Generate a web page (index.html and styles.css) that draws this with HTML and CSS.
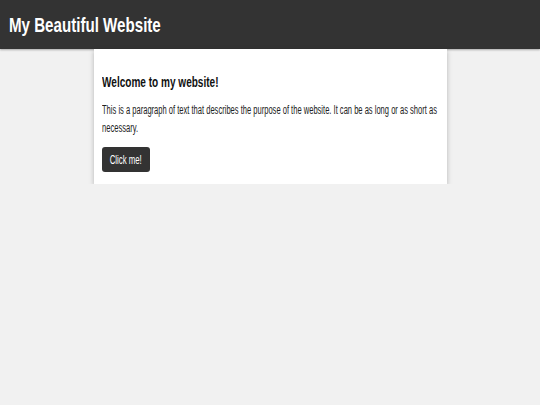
FILE: index.html
```html
<!DOCTYPE html>
<html>
<head>
<meta charset="utf-8">
<link rel="stylesheet" href="styles.css">
</head>
<body>
<header class="site-header">
  <h1 class="site-title"><span class="squeeze">My Beautiful Website</span></h1>
</header>
<main class="card">
  <h2 class="card-title"><span class="squeeze">Welcome to my website!</span></h2>
  <p class="card-text">This is a paragraph of text that describes the purpose of the website. It can be as long or as short as necessary.</p>
  <button class="btn"><span class="squeeze btn-label">Click me!</span></button>
</main>
</body>
</html>
```
FILE: styles.css
```css
html, body {
  margin: 0;
  padding: 0;
}
body {
  background: #f1f1f1;
  font-family: "Liberation Sans", Arial, sans-serif;
  color: #222;
}
.squeeze {
  display: inline-block;
  white-space: nowrap;
  transform-origin: left center;
}
.site-header {
  background: #333;
  height: 49px;
  display: flex;
  align-items: center;
  padding: 0 9px;
  box-shadow: 0 1px 2px rgba(0,0,0,0.3);
}
.site-title {
  margin: 0;
  color: #fff;
  font-size: 21px;
  font-weight: bold;
}
.site-title .squeeze {
  transform: scaleX(0.72);
}
.card {
  width: 337px;
  margin: 0 auto;
  background: #fff;
  padding: 24px 8px 12px;
  box-shadow: 0 2px 5px rgba(0,0,0,0.25);
  overflow: hidden;
}
.card-title {
  margin: 0 0 11px;
  font-size: 15px;
  font-weight: bold;
  color: #111;
}
.card-title .squeeze {
  transform: scaleX(0.67);
}
.card-text {
  width: 535px;
  margin: 0 0 10px;
  font-size: 12px;
  line-height: 18px;
  color: #222;
  transform: scaleX(0.63);
  transform-origin: left top;
}
.btn {
  display: flex;
  justify-content: center;
  align-items: center;
  width: 48px;
  height: 25px;
  padding: 0;
  font-family: inherit;
  background: #333;
  color: #fff;
  border: none;
  border-radius: 3px;
  font-size: 12px;
  overflow: visible;
}
.btn-label {
  transform: scaleX(0.65);
  transform-origin: center center;
}
```
